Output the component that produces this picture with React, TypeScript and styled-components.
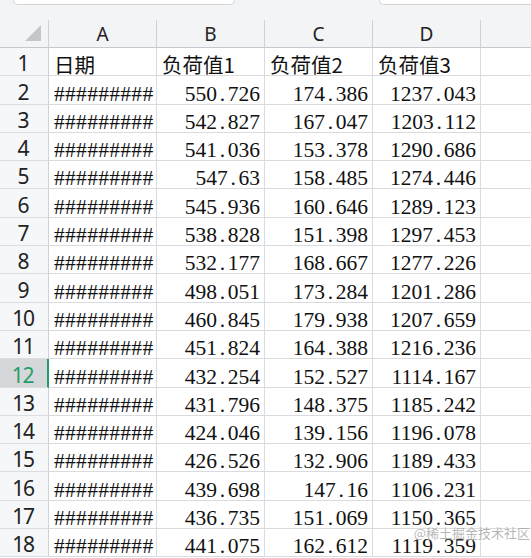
import React from "react";
import styled, { createGlobalStyle, css } from "styled-components";

const GlobalStyle = createGlobalStyle`
  html, body { margin: 0; padding: 0; background: #ffffff; }
  body { overflow: hidden; }
  * { box-sizing: border-box; }
`;

const Sheet = styled.div`
  position: relative;
  width: 531px;
  height: 558px;
  overflow: hidden;
  background: #ffffff;
`;

const FormulaStrip = styled.div`
  display: flex;
  align-items: flex-start;
  gap: 144px;
  height: 20px;
  padding-left: 13px;
  background: #f3f4f6;
`;

const FieldBox = styled.div<{ $width?: number }>`
  height: 5px;
  ${(p) => (p.$width ? css`width: ${p.$width}px;` : css`flex: 1;`)}
  background: #ffffff;
  border: 1px solid #d4d5d8;
  border-top: none;
  border-radius: 0 0 5px 5px;
  ${(p) => !p.$width && css`border-right: none; border-radius: 0 0 0 5px;`}
`;

const Grid = styled.div`
  display: grid;
  grid-template-columns: 49px repeat(4, 108px) 1fr;
  grid-template-rows: 28px;
  grid-auto-rows: 28.3px;
`;

const Corner = styled.div`
  background: #f3f4f6;
  border-right: 1px solid #cfd1d8;
  border-bottom: 1px solid #c6c8cf;
  display: flex;
  align-items: flex-end;
  justify-content: flex-end;
  padding: 0 7px 6px 0;
`;

const ColHead = styled.div<{ $last?: boolean }>`
  background: #f3f4f6;
  border-right: ${(p) => (p.$last ? "none" : "1px solid #cfd1d8")};
  border-bottom: 1px solid #c6c8cf;
  display: flex;
  align-items: center;
  justify-content: center;
  font-family: "Noto Sans", "Liberation Sans", sans-serif;
  font-size: 19px;
  color: #222222;
  padding-top: 1px;
`;

const RowHead = styled.div<{ $selected?: boolean }>`
  background: ${(p) => (p.$selected ? "#d5d7da" : "#f6f7f9")};
  border-right: ${(p) => (p.$selected ? "2px solid #1e9f69" : "1px solid #cfd1d8")};
  border-bottom: 1px solid #dcdde1;
  display: flex;
  align-items: flex-end;
  justify-content: center;
  font-family: "Noto Sans", "Liberation Sans", sans-serif;
  font-size: 21px;
  letter-spacing: -1.2px;
  line-height: 22px;
  padding: 0 2px 1px 0;
  color: ${(p) => (p.$selected ? "#1e9f69" : "#222222")};
`;

const Cell = styled.div<{ $align?: "left" | "right"; $last?: boolean }>`
  border-right: ${(p) => (p.$last ? "none" : "1px solid #dadbde")};
  border-bottom: 1px solid #dadbde;
  display: flex;
  align-items: flex-end;
  justify-content: ${(p) => (p.$align === "right" ? "flex-end" : "flex-start")};
  padding: ${(p) => (p.$align === "right" ? "0 4px 0 0" : "0 0 0 5px")};
  font-family: "Liberation Serif", "Noto Sans CJK SC", serif;
  font-size: 21.5px;
  line-height: 20px;
  color: #111111;
  white-space: nowrap;
`;

const HeadText = styled.span`
  font-family: "Noto Sans CJK SC", "Liberation Serif", serif;
  font-size: 20.5px;
  line-height: 22px;
`;

const Hashes = styled.span`
  letter-spacing: 0.3px;
`;

const Dot = styled.span`
  display: inline-block;
  width: 0.5em;
  text-align: center;
`;

const Watermark = styled.div`
  position: absolute;
  right: 1px;
  bottom: 16px;
  font-family: "Noto Sans CJK SC", sans-serif;
  font-size: 13px;
  color: rgba(150, 150, 150, 0.7);
  text-shadow: 0 0 2px rgba(255, 255, 255, 0.9);
  white-space: nowrap;
`;

const rows: [string, string, string][] = [
  ["550.726", "174.386", "1237.043"],
  ["542.827", "167.047", "1203.112"],
  ["541.036", "153.378", "1290.686"],
  ["547.63", "158.485", "1274.446"],
  ["545.936", "160.646", "1289.123"],
  ["538.828", "151.398", "1297.453"],
  ["532.177", "168.667", "1277.226"],
  ["498.051", "173.284", "1201.286"],
  ["460.845", "179.938", "1207.659"],
  ["451.824", "164.388", "1216.236"],
  ["432.254", "152.527", "1114.167"],
  ["431.796", "148.375", "1185.242"],
  ["424.046", "139.156", "1196.078"],
  ["426.526", "132.906", "1189.433"],
  ["439.698", "147.16", "1106.231"],
  ["436.735", "151.069", "1150.365"],
  ["441.075", "162.612", "1119.359"],
];

function Num({ value }: { value: string }) {
  const [a, b] = value.split(".");
  return (
    <span>
      {a}
      {b !== undefined && <Dot>.</Dot>}
      {b}
    </span>
  );
}

export default function App() {
  return (
    <Sheet>
      <GlobalStyle />
      <FormulaStrip>
        <FieldBox $width={222} />
        <FieldBox />
      </FormulaStrip>
      <Grid>
        <Corner>
          <svg width="16" height="16" viewBox="0 0 16 16">
            <polygon points="16,0 16,16 0,16" fill="#c4c6ca" />
          </svg>
        </Corner>
        {["A", "B", "C", "D"].map((l) => (
          <ColHead key={l}>{l}</ColHead>
        ))}
        <ColHead $last />

        <RowHead>1</RowHead>
        <Cell><HeadText>日期</HeadText></Cell>
        <Cell><HeadText>负荷值1</HeadText></Cell>
        <Cell><HeadText>负荷值2</HeadText></Cell>
        <Cell><HeadText>负荷值3</HeadText></Cell>
        <Cell $last />

        {rows.map((r, i) => (
          <React.Fragment key={i}>
            <RowHead $selected={i + 2 === 12}>{i + 2}</RowHead>
            <Cell><Hashes>#########</Hashes></Cell>
            {r.map((v, j) => (
              <Cell key={j} $align="right">
                <Num value={v} />
              </Cell>
            ))}
            <Cell $last />
          </React.Fragment>
        ))}
      </Grid>
      <Watermark>@稀土掘金技术社区</Watermark>
    </Sheet>
  );
}
